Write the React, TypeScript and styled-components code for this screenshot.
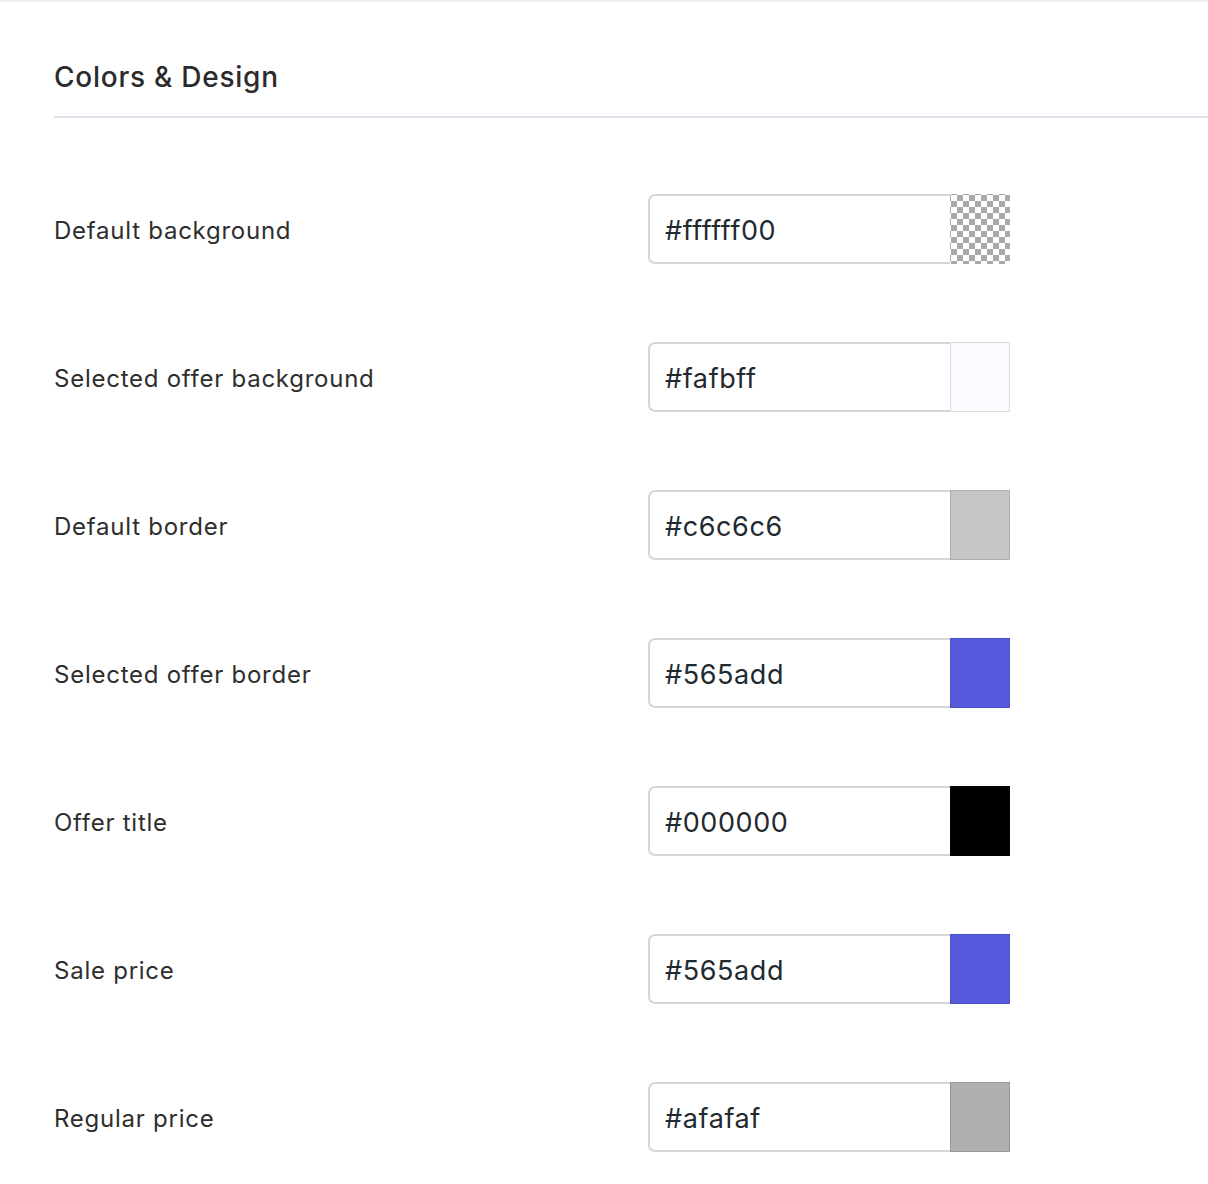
import React from "react";
import styled, { createGlobalStyle } from "styled-components";

const Global = createGlobalStyle`
  html, body { margin: 0; padding: 0; background: #ffffff; }
  body { font-family: Inter, "Noto Sans", "Liberation Sans", sans-serif; }
`;

const Page = styled.div`
  border-top: 2px solid #efefef;
  padding: 0 0 0 54px;
  min-height: 1182px;
  box-sizing: border-box;
`;

const Header = styled.div`
  padding-top: 57px;
  padding-bottom: 21px;
  border-bottom: 2px solid #e1dfea;
`;

const Title = styled.h2`
  margin: 0;
  font-size: 28px;
  line-height: 36px;
  font-weight: 500;
  color: #2b2b2b;
  letter-spacing: 0.75px;
`;

const List = styled.div`
  display: flex;
  flex-direction: column;
  gap: 78px;
  padding-top: 76px;
`;

const Row = styled.div`
  display: grid;
  grid-template-columns: 594px 362px;
  align-items: center;
  height: 70px;
`;

const Label = styled.label`
  font-size: 24px;
  color: #2e2e2e;
  font-weight: 400;
  letter-spacing: 0.75px;
  padding-top: 2px;
`;

const Field = styled.div`
  display: flex;
  height: 70px;
  box-sizing: border-box;
`;

const TextBox = styled.div`
  flex: 1;
  display: flex;
  align-items: center;
  padding-left: 15px;
  padding-top: 2px;
  border: 2px solid #d6d6d6;
  border-right: none;
  border-radius: 7px 0 0 7px;
  font-size: 27px;
  letter-spacing: 0.6px;
  color: #1f2a30;
  box-sizing: border-box;
`;

const Swatch = styled.div<{ $color: string; $transparent?: boolean }>`
  width: 60px;
  height: 70px;
  box-sizing: border-box;
  border: 1px solid rgba(0, 0, 0, 0.12);
  background-color: ${(p) => (p.$transparent ? "#ffffff" : p.$color)};
  ${(p) =>
    p.$transparent
      ? `background-image:
          linear-gradient(45deg, #a9a9a9 25%, transparent 25%, transparent 75%, #a9a9a9 75%),
          linear-gradient(45deg, #a9a9a9 25%, transparent 25%, transparent 75%, #a9a9a9 75%);
        background-size: 12px 12px;
        background-position: 0 0, 6px 6px;
        border-color: transparent;`
      : ""}
`;

const rows = [
  { label: "Default background", value: "#ffffff00", color: "#ffffff", transparent: true },
  { label: "Selected offer background", value: "#fafbff", color: "#fafbff" },
  { label: "Default border", value: "#c6c6c6", color: "#c6c6c6" },
  { label: "Selected offer border", value: "#565add", color: "#565add" },
  { label: "Offer title", value: "#000000", color: "#000000" },
  { label: "Sale price", value: "#565add", color: "#565add" },
  { label: "Regular price", value: "#afafaf", color: "#afafaf" },
];

export default function App() {
  return (
    <>
      <Global />
      <Page>
        <Header>
          <Title>Colors &amp; Design</Title>
        </Header>
        <List>
          {rows.map((r) => (
            <Row key={r.label}>
              <Label>{r.label}</Label>
              <Field>
                <TextBox>{r.value}</TextBox>
                <Swatch $color={r.color} $transparent={r.transparent} />
              </Field>
            </Row>
          ))}
        </List>
      </Page>
    </>
  );
}
